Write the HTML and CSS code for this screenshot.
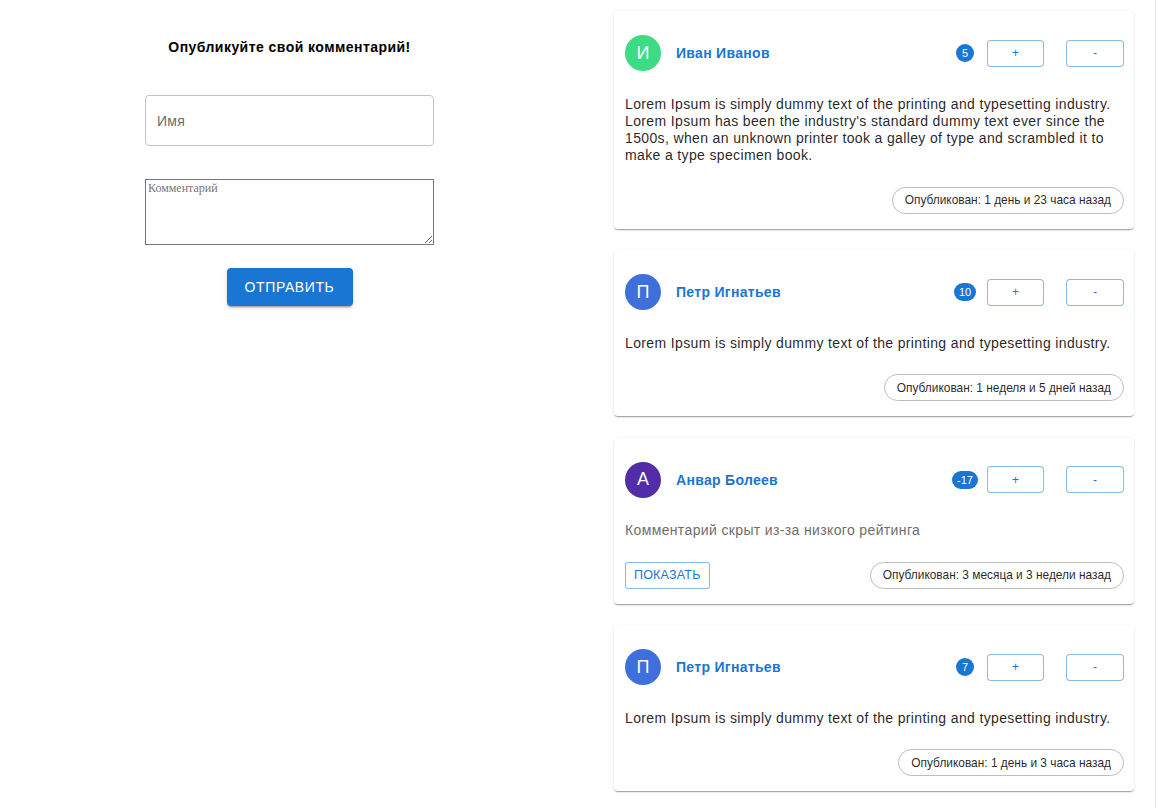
FILE: index.html
```html
<!DOCTYPE html>
<html lang="ru">
<head>
<meta charset="utf-8">
<title>Комментарии</title>
<link rel="stylesheet" href="styles.css">
</head>
<body>
<div class="page">
  <section class="form-col">
    <h2 class="form-title">Опубликуйте свой комментарий!</h2>
    <div class="field"><span class="field-label">Имя</span></div>
    <textarea class="comment-area" placeholder="Комментарий"></textarea>
    <button class="send-btn">Отправить</button>
  </section>
  <section class="list-col">
    <article class="card">
      <header class="card-head">
        <div class="avatar green">И</div>
        <div class="name">Иван Иванов</div>
        <div class="badge-wrap"><span class="badge">5</span></div>
        <button class="vote">+</button>
        <button class="vote minus">-</button>
      </header>
      <p class="text">Lorem Ipsum is simply dummy text of the printing and typesetting industry. Lorem Ipsum has been the industry's standard dummy text ever since the 1500s, when an unknown printer took a galley of type and scrambled it to make a type specimen book.</p>
      <footer class="card-foot"><span class="chip">Опубликован: 1 день и 23 часа назад</span></footer>
    </article>
    <article class="card">
      <header class="card-head">
        <div class="avatar blue">П</div>
        <div class="name">Петр Игнатьев</div>
        <div class="badge-wrap"><span class="badge">10</span></div>
        <button class="vote">+</button>
        <button class="vote minus">-</button>
      </header>
      <p class="text">Lorem Ipsum is simply dummy text of the printing and typesetting industry.</p>
      <footer class="card-foot"><span class="chip">Опубликован: 1 неделя и 5 дней назад</span></footer>
    </article>
    <article class="card">
      <header class="card-head">
        <div class="avatar purple">А</div>
        <div class="name">Анвар Болеев</div>
        <div class="badge-wrap"><span class="badge">-17</span></div>
        <button class="vote">+</button>
        <button class="vote minus">-</button>
      </header>
      <p class="text hidden">Комментарий скрыт из-за низкого рейтинга</p>
      <footer class="card-foot split"><button class="show-btn">Показать</button><span class="chip">Опубликован: 3 месяца и 3 недели назад</span></footer>
    </article>
    <article class="card">
      <header class="card-head">
        <div class="avatar blue">П</div>
        <div class="name">Петр Игнатьев</div>
        <div class="badge-wrap"><span class="badge">7</span></div>
        <button class="vote">+</button>
        <button class="vote minus">-</button>
      </header>
      <p class="text">Lorem Ipsum is simply dummy text of the printing and typesetting industry.</p>
      <footer class="card-foot"><span class="chip">Опубликован: 1 день и 3 часа назад</span></footer>
    </article>
  </section>
</div>
</body>
</html>
```
FILE: styles.css
```css
html, body {
  margin: 0;
  padding: 0;
  background: #fff;
}
body {
  font-family: "Liberation Sans", Arial, sans-serif;
  color: rgba(0, 0, 0, 0.87);
  overflow: hidden;
}
.page {
  display: flex;
  width: 1155px;
  height: 808px;
  border-right: 1px solid #e6e6e6;
}
.form-col {
  width: 579px;
  flex: none;
  display: flex;
  flex-direction: column;
  align-items: center;
  padding-top: 38px;
  box-sizing: border-box;
}
.form-title {
  margin: 0;
  font-size: 14px;
  font-weight: bold;
  line-height: 18px;
  letter-spacing: 0.45px;
  color: #000;
}
.field {
  margin-top: 39px;
  width: 289px;
  height: 51px;
  box-sizing: border-box;
  border: 1px solid #c4c4c4;
  border-radius: 4px;
  display: flex;
  align-items: center;
  padding-left: 11px;
}
.field-label {
  font-size: 14px;
  letter-spacing: 0.3px;
  color: #6b6b6b;
}
.comment-area {
  margin-top: 33px;
  width: 289px;
  height: 66px;
  box-sizing: border-box;
  border: 1px solid #767676;
  padding: 1px 2px;
  font-family: "Liberation Serif", "Times New Roman", serif;
  font-size: 12px;
  resize: vertical;
  display: block;
}
.comment-area::placeholder {
  color: #757575;
}
.send-btn {
  margin-top: 23px;
  width: 126px;
  height: 38px;
  border: none;
  border-radius: 4px;
  background: #1976d2;
  color: #fff;
  font-family: "Liberation Sans", Arial, sans-serif;
  font-size: 14px;
  letter-spacing: 0.6px;
  text-transform: uppercase;
  box-shadow: 0 3px 1px -2px rgba(0,0,0,0.2), 0 2px 2px 0 rgba(0,0,0,0.14), 0 1px 5px 0 rgba(0,0,0,0.12);
}
.list-col {
  flex: none;
  padding-left: 35px;
  padding-top: 11px;
  display: flex;
  flex-direction: column;
  gap: 21.5px;
}
.card {
  width: 520px;
  box-sizing: border-box;
  padding: 24px 10px 15px 11px;
  border-radius: 4px;
  background: #fff;
  box-shadow: 0 2px 1px -1px rgba(0,0,0,0.2), 0 1px 1px 0 rgba(0,0,0,0.14), 0 1px 3px 0 rgba(0,0,0,0.12);
}
.card-head {
  display: flex;
  align-items: center;
  height: 36px;
}
.avatar {
  width: 36px;
  height: 36px;
  border-radius: 50%;
  display: flex;
  align-items: center;
  justify-content: center;
  color: #fff;
  font-family: "Liberation Sans", Arial, sans-serif;
  font-size: 18px;
  flex: none;
}
.green { background: #3ddc84; }
.blue { background: #3f6fdb; }
.purple { background: #512da8; }
.name {
  margin-left: 15px;
  font-size: 14px;
  font-weight: bold;
  letter-spacing: 0.3px;
  color: #1976d2;
  flex: 1;
}
.badge-wrap {
  width: 28px;
  display: flex;
  justify-content: center;
  margin-right: 8px;
}
.badge {
  min-width: 18px;
  height: 18px;
  box-sizing: border-box;
  border-radius: 9px;
  background: #1976d2;
  color: #fff;
  font-size: 11px;
  display: flex;
  align-items: center;
  justify-content: center;
  padding: 0 5px;
}
.vote {
  width: 57px;
  height: 27px;
  box-sizing: border-box;
  border: 1px solid rgba(25, 118, 210, 0.5);
  border-radius: 4px;
  background: #fff;
  color: #1976d2;
  font-family: "Liberation Sans", Arial, sans-serif;
  font-size: 12px;
  padding: 0;
}
.vote.minus {
  margin-left: 22px;
  width: 58px;
}
.text {
  margin: 24.5px 0 0;
  font-size: 14px;
  line-height: 17.25px;
  letter-spacing: 0.36px;
  color: rgba(0, 0, 0, 0.87);
}
.text.hidden {
  color: #6e6e6e;
}
.card-foot {
  margin-top: 22.25px;
  display: flex;
  justify-content: flex-end;
  align-items: center;
}
.card-foot.split {
  justify-content: space-between;
}
.chip {
  height: 27px;
  box-sizing: border-box;
  border: 1px solid #bdbdbd;
  border-radius: 14px;
  padding: 0 12px;
  display: flex;
  align-items: center;
  font-size: 11.9px;
  color: rgba(0, 0, 0, 0.87);
}
.show-btn {
  height: 27px;
  box-sizing: border-box;
  border: 1px solid rgba(25, 118, 210, 0.5);
  border-radius: 3px;
  background: #fff;
  color: #1976d2;
  font-family: "Liberation Sans", Arial, sans-serif;
  font-size: 12.5px;
  letter-spacing: 0.2px;
  text-transform: uppercase;
  padding: 0 8px;
}
```
